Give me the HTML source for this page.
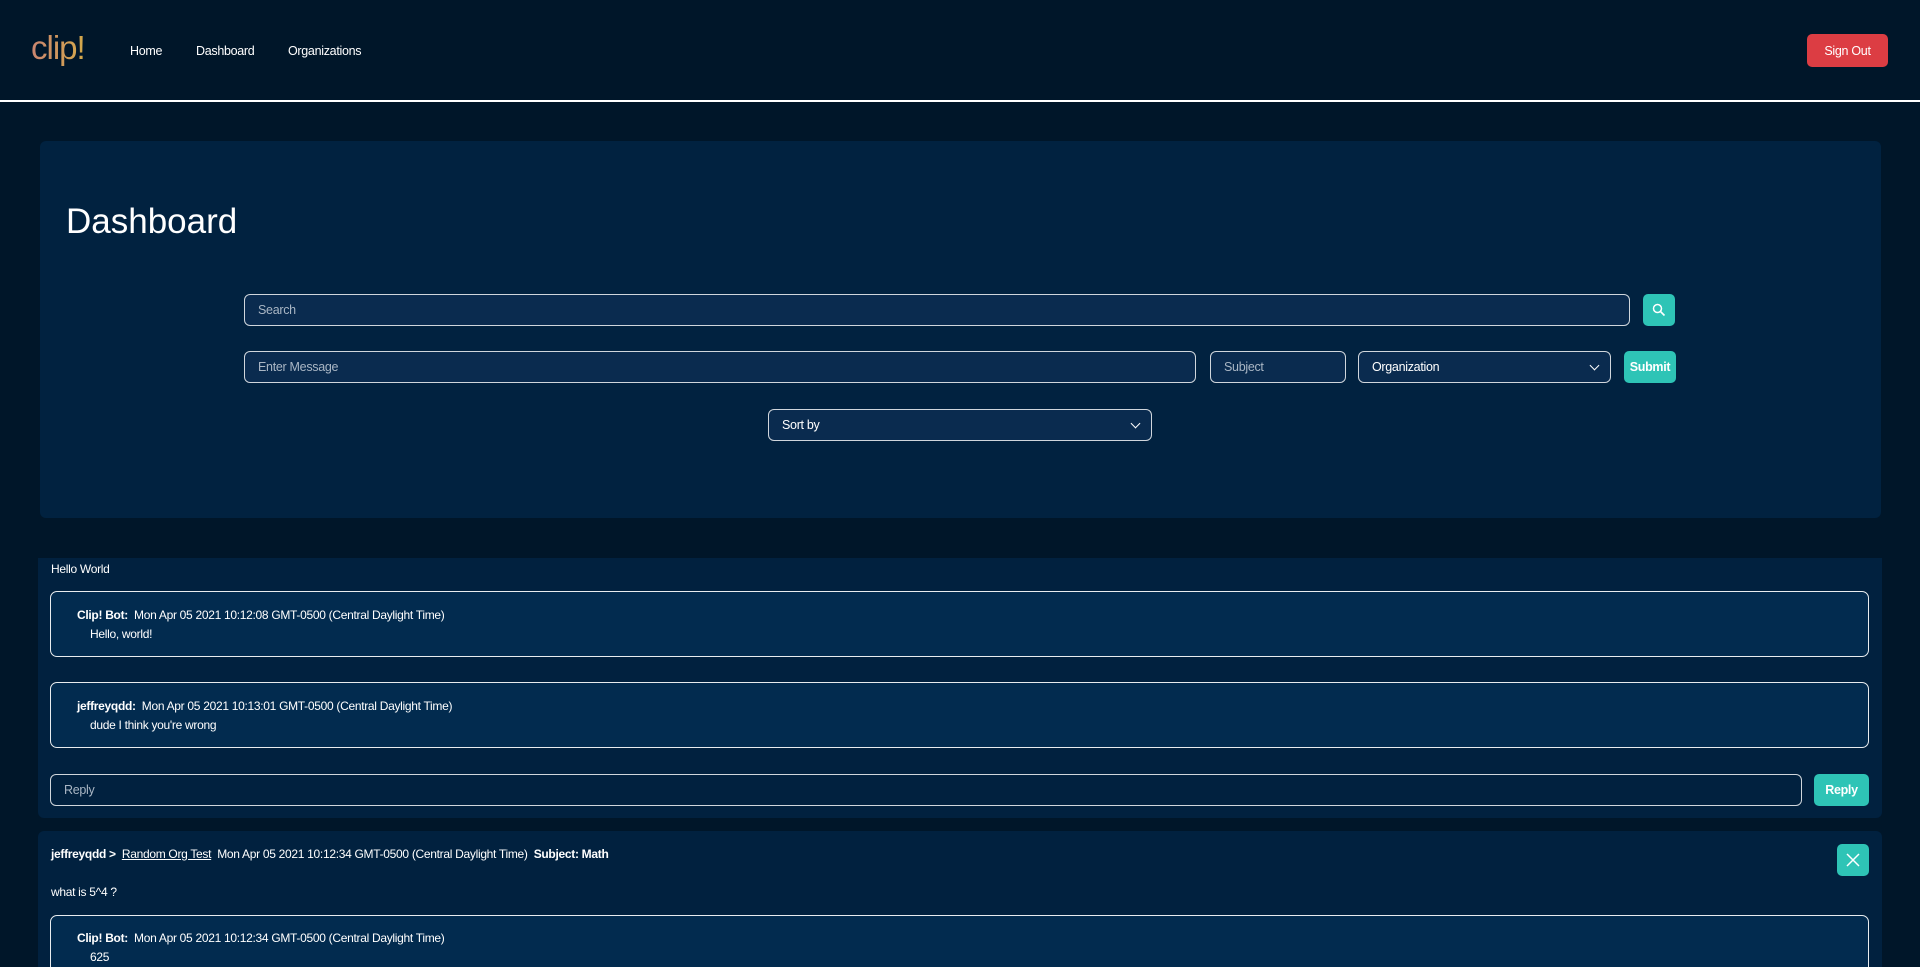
<!DOCTYPE html>
<html style="overflow:hidden;height:967px"><head><meta charset="utf-8"><style>
*{box-sizing:border-box;margin:0;padding:0}
body{width:1920px;height:967px;background:#001629;font-family:"Liberation Sans",sans-serif;color:#fff;position:relative;overflow:hidden;font-size:12px;letter-spacing:-0.3px}
.a{position:absolute}
.logo{left:31px;top:29px;font-size:33px;font-weight:normal;letter-spacing:-1px;background:linear-gradient(90deg,#c98570,#d4a94a);-webkit-background-clip:text;color:transparent}
.nav{top:44px;font-size:12.5px}
.hr{left:0;top:100px;width:1920px;height:2px;background:#fff}
.btn{display:flex;align-items:center;justify-content:center;border-radius:5px;font-weight:bold;font-size:12.5px}
.teal{background:#2ec4b6}
.inp{background:#0a2b4f;border:1px solid #d0d6dc;border-radius:6px;color:#a9b6c4;font-size:12.5px;padding-left:13px;display:flex;align-items:center}
.sel{color:#fff}
.chev{position:absolute;right:12px;top:10px;width:7px;height:7px;border-right:1.5px solid #fff;border-bottom:1.5px solid #fff;transform:rotate(45deg)}
.card{background:#01213f;border-radius:6px}
.rb{background:#022b4f;border:1.5px solid #e8ecef;border-radius:7px}
b{font-weight:bold}
</style></head><body>
<div class="a logo">clip!</div>
<div class="a nav" style="left:130px">Home</div>
<div class="a nav" style="left:196px">Dashboard</div>
<div class="a nav" style="left:288px">Organizations</div>
<div class="a btn" style="left:1807px;top:34px;width:81px;height:33px;background:#dc3d43;font-weight:normal">Sign Out</div>
<div class="a hr"></div>

<div class="a card" style="left:40px;top:141px;width:1841px;height:377px;background:#012240"></div>
<div class="a" style="left:66px;top:202px;font-size:35px;letter-spacing:0">Dashboard</div>
<div class="a inp" style="left:244px;top:294px;width:1386px;height:32px">Search</div>
<div class="a btn teal" style="left:1643px;top:294px;width:32px;height:32px"><svg width="14" height="14" viewBox="0 0 14 14"><circle cx="5.5" cy="5.5" r="4" fill="none" stroke="#fff" stroke-width="1.5"/><path d="M8.5 8.5L12.5 12.5" stroke="#fff" stroke-width="1.6"/></svg></div>
<div class="a inp" style="left:244px;top:351px;width:952px;height:32px">Enter Message</div>
<div class="a inp" style="left:1210px;top:351px;width:136px;height:32px">Subject</div>
<div class="a inp sel" style="left:1358px;top:351px;width:253px;height:32px">Organization<span class="chev"></span></div>
<div class="a btn teal" style="left:1624px;top:351px;width:52px;height:32px">Submit</div>
<div class="a inp sel" style="left:768px;top:409px;width:384px;height:32px">Sort by<span class="chev"></span></div>

<div class="a" style="left:38px;top:558px;width:1844px;height:260px;background:#01213f;border-radius:0 0 6px 6px"></div>
<div class="a" style="left:51px;top:562px">Hello World</div>
<div class="a rb" style="left:50px;top:591px;width:1819px;height:66px"></div>
<div class="a" style="left:77px;top:608px"><b>Clip! Bot:</b>&nbsp; Mon Apr 05 2021 10:12:08 GMT-0500 (Central Daylight Time)</div>
<div class="a" style="left:90px;top:627px">Hello, world!</div>
<div class="a rb" style="left:50px;top:682px;width:1819px;height:66px"></div>
<div class="a" style="left:77px;top:699px"><b>jeffreyqdd:</b>&nbsp; Mon Apr 05 2021 10:13:01 GMT-0500 (Central Daylight Time)</div>
<div class="a" style="left:90px;top:718px">dude I think you're wrong</div>
<div class="a inp" style="left:50px;top:774px;width:1752px;height:32px;background:#01213f">Reply</div>
<div class="a btn teal" style="left:1814px;top:774px;width:55px;height:32px">Reply</div>

<div class="a" style="left:38px;top:831px;width:1844px;height:136px;background:#01213f;border-radius:6px 6px 0 0"></div>
<div class="a" style="left:51px;top:847px"><b>jeffreyqdd &gt;</b>&nbsp; <u>Random Org Test</u>&nbsp; Mon Apr 05 2021 10:12:34 GMT-0500 (Central Daylight Time)&nbsp; <b>Subject: Math</b></div>
<div class="a btn teal" style="left:1837px;top:844px;width:32px;height:32px"><svg width="14" height="14" viewBox="0 0 14 14"><path d="M1 1L13 13M13 1L1 13" stroke="#fff" stroke-width="1.5"/></svg></div>
<div class="a" style="left:51px;top:885px">what is 5^4 ?</div>
<div class="a rb" style="left:50px;top:915px;width:1819px;height:80px"></div>
<div class="a" style="left:77px;top:931px"><b>Clip! Bot:</b>&nbsp; Mon Apr 05 2021 10:12:34 GMT-0500 (Central Daylight Time)</div>
<div class="a" style="left:90px;top:950px">625</div>
</body></html>
